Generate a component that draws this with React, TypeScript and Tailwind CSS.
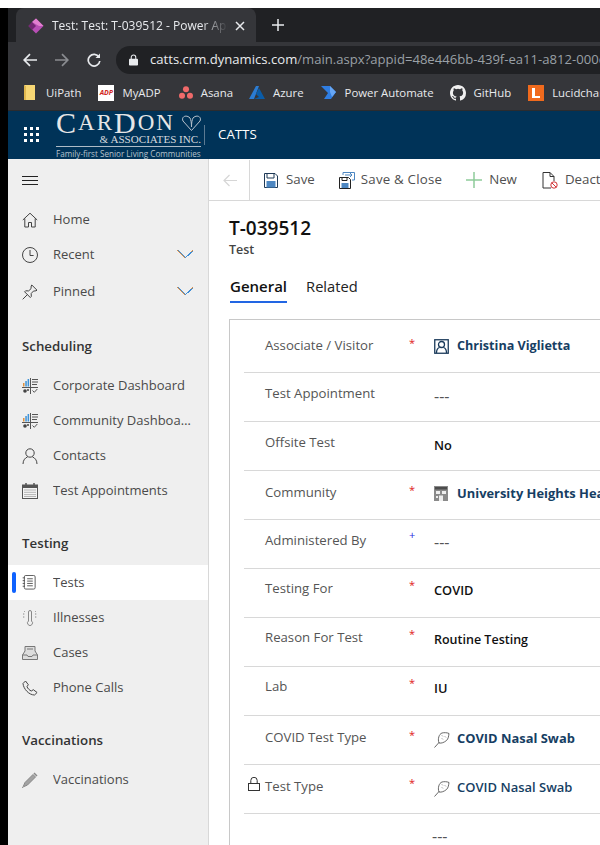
import React from "react";

const font = "[font-family:'Open_Sans','Noto_Sans',sans-serif]";

function Stroke({ children, size = 16, vb = 16, color = "#444", sw = 1 }: { children: React.ReactNode; size?: number; vb?: number; color?: string; sw?: number }) {
  return (
    <svg width={size} height={size} viewBox={`0 0 ${vb} ${vb}`} fill="none" stroke={color} strokeWidth={sw} className="shrink-0">
      {children}
    </svg>
  );
}

const HomeIcon = () => (
  <Stroke>
    <path d="M.8 8 8 1.200 15.200 8M2.800 6.500V15h3.700v-4.500h3V15h3.700V6.500" />
  </Stroke>
);
const ClockIcon = () => (
  <Stroke>
    <circle cx="8" cy="8" r="7.500" />
    <path d="M8 3v5.500h3.600" />
  </Stroke>
);
const PinIcon = () => (
  <Stroke>
    <path d="M.7 15.300 5.500 10.500M9.800 1 15 6.200l-1 .6-2.600.3-2.200 2.400.1 3-1 1L2.600 7.800l1-1 3 .1 2.400-2.200.2-2.700z" />
  </Stroke>
);
const DashIcon = () => (
  <svg width="16" height="16" viewBox="0 0 16 16" fill="none" className="shrink-0">
    <path d="M0 9.500h16M8.500 0v16" stroke="#555" />
    <path d="M1 5h1.500v3.500H1z" fill="#e0913f" />
    <path d="M3.300 3h1.500v5.500H3.300zM5.600 1h1.500v7.500H5.600z" fill="#3e93d8" />
    <path d="M10 1.500h6M10 4h6M10 6.500h5" stroke="#555" />
    <circle cx="3" cy="13" r="1.800" fill="#444" />
    <circle cx="6" cy="12" r="1" fill="#444" />
    <path d="M10.500 12.500l1.800 1.800 3-3.300" stroke="#555" />
  </svg>
);
const PersonIcon = () => (
  <Stroke>
    <circle cx="8" cy="5" r="4.200" />
    <path d="M1 16c0-4 2.500-6.500 4.500-7M15 16c0-4-2.500-6.500-4.500-7" />
  </Stroke>
);
const CalIcon = () => (
  <svg width="16" height="16" viewBox="0 0 16 16" className="shrink-0">
    <rect x=".5" y="2" width="15" height="13.500" fill="#f4f4f4" stroke="#555" />
    <rect x="0" y="2" width="16" height="3" fill="#555" />
    <path d="M4 0v3M12 0v3" stroke="#555" strokeWidth="1.500" />
    <path d="M2.500 7h11M2.500 9.300h11M2.500 11.600h11M2.500 13.500h11" stroke="#777" strokeDasharray="1 1" />
  </svg>
);
const TestsIcon = () => (
  <Stroke size={15}>
    <rect x="2.500" y=".5" width="11.500" height="14.500" rx="1.500" stroke="#555" />
    <path d="M5.500 4h6M5.500 6.500h6M5.500 9h6M5.500 11.500h6M.7 3h2.500M.7 6h2.500M.7 9h2.500M.7 12h2.500" stroke="#555" />
  </Stroke>
);
const ThermoIcon = () => (
  <Stroke color="#888">
    <path d="M6.500 2a1.500 1.500 0 0 1 3 0v9a2.500 2.500 0 1 1-3 0z" />
    <path d="M1 4h2M1 7h2M2 1l1 1M13 4h2M13 7h2M13 2l1-1" strokeDasharray="1 .7" />
  </Stroke>
);
const CasesIcon = () => (
  <svg width="16" height="14" viewBox="0 0 16 14" className="shrink-0" fill="none" stroke="#777">
    <path d="M3 .5h10v6H3z" fill="#ddd" />
    <path d="M5 3h6" />
    <path d="M3 5 .5 9v4.500h15V9L13 5" fill="#ddd" />
    <path d="M.5 9h4.500l1 1.500h4l1-1.500h4.500" />
  </svg>
);
const PhoneIcon = () => (
  <Stroke color="#444">
    <path d="M1 3.500 3.500 1 6.300 4.700 5 6.700c.7 1.800 2.500 3.600 4.300 4.300l2-1.300 3.800 2.800-2.600 2.500C7 15 1.500 9 1 3.500z" />
  </Stroke>
);
const PencilIcon = () => (
  <svg width="16" height="16" viewBox="0 0 16 16" className="shrink-0">
    <path d="M1 15 3 10.500 11 2.500 13.500 5 5.500 13z" fill="#a2a2a2" stroke="#888" />
    <path d="M12 1l3 3" stroke="#888" strokeWidth="1.500" />
    <path d="M0 16l2-2" stroke="#999" />
  </svg>
);
const Chevron = () => (
  <svg width="17" height="9" viewBox="0 0 17 9" fill="none" strokeWidth="1" shapeRendering="crispEdges" className="shrink-0">
    <path d="M.5.500 8 8 15.500.5" stroke="#dd8f45" />
    <path d="M1.500.500 8.500 7.500 16.500.5" stroke="#3f8ed6" />
  </svg>
);
const Hamburger = () => (
  <svg width="16" height="9" viewBox="0 0 16 9" stroke="#222" className="shrink-0">
    <path d="M0 .5h16M0 4.500h16M0 8.500h16" />
  </svg>
);

type NavItem = { label: string; icon: React.ReactNode; chevron?: boolean; selected?: boolean };

function NavRow({ item }: { item: NavItem }) {
  return (
    <div className={`relative flex h-[35px] items-center pl-[14px] pr-[14px] ${item.selected ? "bg-white" : ""}`}>
      {item.selected && <span className="absolute left-1 top-[7px] h-[21px] w-1 rounded-sm bg-[#0f62fe]" />}
      <span className="flex w-[31px] shrink-0 items-center justify-start">{item.icon}</span>
      <span className="flex-1 truncate pr-[2px] text-[13px] text-[#4a4a4a]">{item.label}</span>
      {item.chevron && <Chevron />}
    </div>
  );
}

function SectionTitle({ children, className }: { children: React.ReactNode; className: string }) {
  return <div className={`pl-[14px] text-[13.300px] font-semibold leading-[18px] text-[#333] ${className}`}>{children}</div>;
}

function Sidebar() {
  return (
    <aside className="flex w-[201px] shrink-0 flex-col border-r border-[#d8d8d8] bg-[#efefef]">
      <div className="flex h-[43px] items-center pl-[14px]">
        <Hamburger />
      </div>
      <NavRow item={{ label: "Home", icon: <HomeIcon /> }} />
      <NavRow item={{ label: "Recent", icon: <ClockIcon />, chevron: true }} />
      <div className="mt-[2px]">
        <NavRow item={{ label: "Pinned", icon: <PinIcon />, chevron: true }} />
      </div>
      <SectionTitle className="mt-[28px]">Scheduling</SectionTitle>
      <div className="mt-[13px]">
        <NavRow item={{ label: "Corporate Dashboard", icon: <DashIcon /> }} />
        <NavRow item={{ label: "Community Dashboard", icon: <DashIcon /> }} />
        <NavRow item={{ label: "Contacts", icon: <PersonIcon /> }} />
        <NavRow item={{ label: "Test Appointments", icon: <CalIcon /> }} />
      </div>
      <SectionTitle className="mt-[26px]">Testing</SectionTitle>
      <div className="mt-[13px]">
        <NavRow item={{ label: "Tests", icon: <TestsIcon />, selected: true }} />
        <NavRow item={{ label: "Illnesses", icon: <ThermoIcon /> }} />
        <NavRow item={{ label: "Cases", icon: <CasesIcon /> }} />
        <NavRow item={{ label: "Phone Calls", icon: <PhoneIcon /> }} />
      </div>
      <SectionTitle className="mt-[26px]">Vaccinations</SectionTitle>
      <div className="mt-[13px]">
        <NavRow item={{ label: "Vaccinations", icon: <PencilIcon /> }} />
      </div>
    </aside>
  );
}

function CommandBar() {
  return (
    <div className="flex h-[42px] shrink-0 items-center border-b border-[#d8d8d8] pt-[1px] text-[13.300px] text-[#505050]">
      <div className="flex h-full w-[41px] shrink-0 items-center justify-center border-r border-[#d8d8d8] pl-[1px]">
        <svg width="14" height="13" viewBox="0 0 14 13" fill="none" stroke="#d6d6d6" strokeWidth="1.200">
          <path d="M14 6.500H1M6.500 1 1 6.500 6.500 12" />
        </svg>
      </div>
      <div className="ml-[14px] flex items-center whitespace-nowrap">
        <svg width="14" height="15" viewBox="0 0 14 15" fill="none" className="mr-2 shrink-0">
          <path d="M.5.500h10.500l2.500 2.500v11.500H.5z" stroke="#1f3a57" />
          <path d="M3 .5h7v4.500H3z" stroke="#1f3a57" />
          <rect x="2.500" y="8" width="9" height="6.500" fill="#4d87c2" />
        </svg>
        <span>Save</span>
        <svg width="16" height="17" viewBox="0 0 16 17" fill="none" className="ml-[24px] mr-[6px] shrink-0">
          <path d="M.5 5.500h9l2 2v9H.5z" stroke="#222" />
          <rect x="2.500" y="11" width="7" height="5" fill="#4d87c2" />
          <path d="M3 5.500v3h5v-3" stroke="#222" />
          <path d="M4 3V.5h11.500V8H13M6 3h7M11 1l2 2-2 2" stroke="#4d87c2" />
        </svg>
        <span className="tracking-[.2px]">Save &amp; Close</span>
        <svg width="16" height="16" viewBox="0 0 16 16" stroke="#8ecb9a" strokeWidth="1.500" className="ml-[24px] mr-[7px] shrink-0">
          <path d="M8 0v16M0 8h16" />
        </svg>
        <span>New</span>
        <svg width="16" height="17" viewBox="0 0 16 17" fill="none" className="ml-[25px] mr-[7px] shrink-0">
          <path d="M9 16H1V.5h7l4 4V9" stroke="#333" />
          <path d="M8 .5v4h4" stroke="#333" />
          <circle cx="12" cy="13" r="3.200" stroke="#d13438" />
          <path d="M9.800 10.800l4.400 4.400" stroke="#d13438" />
        </svg>
        <span>Deactivate</span>
      </div>
    </div>
  );
}

const ContactIcon = () => (
  <svg width="15" height="15" viewBox="0 0 15 15" fill="none" stroke="#1a3a5a" className="mr-2 shrink-0">
    <rect x=".75" y=".75" width="13.500" height="13.500" strokeWidth="1.300" />
    <circle cx="7.500" cy="5.500" r="3" strokeWidth="1.300" />
    <path d="M2.500 14c0-3 1.500-5 3-5.500M12.500 14c0-3-1.500-5-3-5.500" strokeWidth="1.300" />
  </svg>
);
const BuildingIcon = () => (
  <svg width="15" height="16" viewBox="0 0 15 16" className="mr-2 shrink-0">
    <rect x="0" y="0" width="14" height="15" fill="#8a8a8a" />
    <rect x="1" y="1" width="12" height="2.500" fill="#4c4c4c" />
    <rect x="2" y="5" width="4" height="3" fill="#eee" />
    <rect x="8" y="5" width="4" height="3" fill="#eee" />
    <rect x="5" y="9.500" width="4" height="5.500" fill="#eee" />
    <rect x="2" y="10" width="2" height="2" fill="#eee" />
  </svg>
);
const SwabIcon = () => (
  <svg width="16" height="17" viewBox="0 0 16 17" fill="none" stroke="#444" strokeWidth=".8" className="mr-[7px] shrink-0">
    <path d="M.5 16.500 5 11.500" />
    <path d="M5 12C3.500 8 5 3 8 2c2-.5 5-.5 7 .5-.5 3-.5 5-2.500 7-2.500 2-5 3-7.500 2.500z" />
    <path d="M8 4.500l.8.8M11 5.500l.8.8M8 7.500l.8.8" />
  </svg>
);

type Row = {
  label: string;
  mark?: string;
  value: string;
  valueClass: string;
  icon?: React.ReactNode;
  lock?: boolean;
  rowClass: string;
  labelClass: string;
  markClass: string;
  valueTop: string;
};

const link = "text-[13px] font-semibold text-[#163e63]";
const bold = "text-[12.900px] font-bold text-[#163e63]";
const plain = "text-[12.800px] font-semibold text-[#111]";
const empty = "text-[16px] text-[#555]";

const rows: Row[] = [
  { label: "Associate / Visitor", mark: "*", value: "Christina Viglietta", valueClass: "text-[12.600px] font-bold text-[#163e63]", icon: <ContactIcon />, rowClass: "h-[53px]", labelClass: "pt-[15px]", markClass: "pt-[16px]", valueTop: "pt-[16px]" },
  { label: "Test Appointment", value: "---", valueClass: empty, rowClass: "h-[49px]", labelClass: "pt-[10px]", markClass: "pt-[11px]", valueTop: "pt-[13px]" },
  { label: "Offsite Test", value: "No", valueClass: plain, rowClass: "h-[49px]", labelClass: "pt-[10px]", markClass: "pt-[11px]", valueTop: "pt-[14px]" },
  { label: "Community", mark: "*", value: "University Heights Health and Living", valueClass: bold, icon: <BuildingIcon />, rowClass: "h-[49px]", labelClass: "pt-[11px]", markClass: "pt-[12px]", valueTop: "pt-[13px]" },
  { label: "Administered By", mark: "+", value: "---", valueClass: empty, rowClass: "h-[49px]", labelClass: "pt-[10px]", markClass: "pt-[8px]", valueTop: "pt-[12px]" },
  { label: "Testing For", mark: "*", value: "COVID", valueClass: plain, rowClass: "h-[49px]", labelClass: "pt-[9px]", markClass: "pt-[9px]", valueTop: "pt-[12px]" },
  { label: "Reason For Test", mark: "*", value: "Routine Testing", valueClass: "text-[12.500px] font-semibold text-[#111]", rowClass: "h-[49px]", labelClass: "pt-[9px]", markClass: "pt-[9px]", valueTop: "pt-[12px]" },
  { label: "Lab", mark: "*", value: "IU", valueClass: plain, rowClass: "h-[49px]", labelClass: "pt-[9px]", markClass: "pt-[9px]", valueTop: "pt-[12px]" },
  { label: "COVID Test Type", mark: "*", value: "COVID Nasal Swab", valueClass: bold, icon: <SwabIcon />, rowClass: "h-[49px]", labelClass: "pt-[11px]", markClass: "pt-[12px]", valueTop: "pt-[13px]" },
  { label: "Test Type", mark: "*", value: "COVID Nasal Swab", valueClass: link, icon: <SwabIcon />, lock: true, rowClass: "h-[49px]", labelClass: "pt-[11px]", markClass: "pt-[11px]", valueTop: "pt-[13px]" },
];

function FormRow({ row }: { row: Row }) {
  return (
    <div className={`relative flex border-b border-[#d8d8d8] ${row.rowClass}`}>
      {row.lock && (
        <svg width="12" height="14" viewBox="0 0 12 14" fill="none" stroke="#333" className="absolute left-[4px] top-[12px]">
          <rect x=".5" y="6.500" width="11" height="7" />
          <path d="M2.800 6.500V3.500a3.200 3.200 0 0 1 6.400 0v3" />
        </svg>
      )}
      <div className={`w-[165px] shrink-0 pl-[21px] text-[13.200px] leading-[20px] text-[#555] ${row.labelClass}`}>{row.label}</div>
      <div className={`w-[25px] shrink-0 text-[11px] leading-[14px] ${row.mark === "+" ? "text-[#1f1fe0]" : "text-[#e02020]"} ${row.markClass}`}>
        {row.mark}
      </div>
      <div className={`self-start whitespace-nowrap ${row.valueTop}`}>
        <div className={`flex h-[20px] items-center ${row.valueClass}`}>
          {row.icon}
          <span>{row.value}</span>
        </div>
      </div>
    </div>
  );
}

function Logo() {
  return (
    <div className="flex h-full w-[148px] shrink-0 flex-col items-stretch overflow-hidden">
      <div className="flex h-[23px] items-center tracking-[2px] [font-family:'Liberation_Serif',serif] text-[#e6e6e6]">
        <span className="text-[30px] leading-[23px]">C</span>
        <span className="text-[23px] leading-[23px]">AR</span>
        <span className="text-[30px] leading-[23px]">D</span>
        <span className="text-[23px] leading-[23px]">ON</span>
        <svg width="21" height="16" viewBox="0 0 21 16" fill="none" stroke="#b9c2cc" className="ml-[6px] shrink-0">
          <path d="M10.500 15.500 2 6C0 2 5-1 9 3c1 2 1.500 5 1.500 9M10.500 15.500 19 6c2-4-3-7-7-3-1 2-1.500 5-1.500 9" />
        </svg>
      </div>
      <div className="pr-[3px] text-right [font-family:'Liberation_Serif',serif] text-[11.100px] leading-[11px] text-[#d5d9de]">&amp; ASSOCIATES INC.</div>
      <div className="mt-[1px] h-[2px] w-[145px] bg-[#aebbc6]" />
      <div className="mt-[2px] whitespace-nowrap text-[8.150px] leading-[10px] text-[#b7c2cc]">Family-first Senior Living Communities</div>
    </div>
  );
}

function Bookmark({ label, icon, className }: { label: string; icon: React.ReactNode; className: string }) {
  return (
    <div className={`flex shrink-0 items-center gap-[8px] ${className}`}>
      {icon}
      <span>{label}</span>
    </div>
  );
}

function Chrome() {
  return (
    <div className="shrink-0">
      <div className="flex h-[34px] items-end bg-[#202124] pl-[8px]">
        <div className="flex h-[34px] w-[240px] shrink-0 items-center rounded-t-lg bg-[#35363a] pl-[12px] pr-[11px] pt-[1px] text-[12px] text-[#e8eaed]">
          <svg width="16" height="16" viewBox="0 0 16 16" className="mr-[8px] shrink-0">
            <path d="M8 .5 15.500 8 8 15.500.5 8z" fill="#b84fb5" />
            <path d="M8 .5 15.500 8 11 8 4 4z" fill="#e27fd0" />
            <path d="M.5 8 4 4l4 4-4 4z" fill="#742774" />
          </svg>
          <span className="flex-1 overflow-hidden whitespace-nowrap [mask-image:linear-gradient(to_right,black_85%,transparent)]">Test: Test: T-039512 - Power Apps</span>
          <svg width="10" height="10" viewBox="0 0 10 10" stroke="#e8eaed" strokeWidth="1.500" className="ml-[7px] shrink-0">
            <path d="M1 1l8 8M9 1 1 9" />
          </svg>
        </div>
        <svg width="12" height="12" viewBox="0 0 12 12" stroke="#e8eaed" strokeWidth="1.500" className="mb-[11px] ml-[16px] shrink-0">
          <path d="M6 0v12M0 6h12" />
        </svg>
      </div>
      <div className="flex h-[32px] items-center bg-[#35363a] pl-[15px] pt-[4px]">
        <svg width="14" height="14" viewBox="0 0 14 14" fill="none" stroke="#e8eaed" strokeWidth="1.700" className="shrink-0">
          <path d="M14 7H1.500M7 1.200 1.200 7 7 12.800" />
        </svg>
        <svg width="14" height="14" viewBox="0 0 14 14" fill="none" stroke="#8a8c90" strokeWidth="1.700" className="ml-[18px] shrink-0">
          <path d="M0 7h12.500M7 1.200 12.800 7 7 12.800" />
        </svg>
        <svg width="14" height="14" viewBox="0 0 14 14" fill="none" stroke="#e8eaed" strokeWidth="1.700" className="ml-[18px] shrink-0">
          <path d="M12 4.200A5.800 5.800 0 1 0 12.800 8" />
          <path d="M13 0.500V5H8.500z" fill="#e8eaed" stroke="none" />
        </svg>
        <div className="ml-[15px] flex h-[28px] flex-1 items-center overflow-hidden rounded-l-[14px] bg-[#202124] pl-[13px] text-[13.100px]">
          <svg width="9" height="12" viewBox="0 0 10 12" className="mr-[12px] shrink-0">
            <rect y="4.500" width="10" height="7.500" rx="1" fill="#e8eaed" />
            <path d="M2.500 5V3a2.500 2.500 0 0 1 5 0v2" fill="none" stroke="#e8eaed" strokeWidth="1.200" />
          </svg>
          <span className="whitespace-nowrap text-[#e8eaed]">catts.crm.dynamics.com</span>
          <span className="whitespace-nowrap text-[#9aa0a6]">/main.aspx?appid=48e446bb-439f-ea11-a812-000d3a8b3ec6</span>
        </div>
      </div>
      <div className="flex h-[37px] items-center overflow-hidden border-b border-[#2b2c2f] bg-[#35363a] pl-[16px] pt-[2px] text-[11.400px] text-[#e8eaed]">
        <Bookmark
          label="UiPath"
          className="gap-[10px]"
          icon={<svg width="12" height="15" viewBox="0 0 12 15"><path d="M0 1a1 1 0 0 1 1-1h10v15H1a1 1 0 0 1-1-1z" fill="#f7d774" /><path d="M0 1h2v14H1a1 1 0 0 1-1-1z" fill="#e0b84f" /></svg>}
        />
        <Bookmark
          label="MyADP"
          className="ml-[17px]"
          icon={<span className="flex h-4 w-4 items-center justify-center bg-white text-[7px] font-bold italic leading-none text-[#d0271d]">ADP</span>}
        />
        <Bookmark
          label="Asana"
          className="ml-[18px]"
          icon={<svg width="14" height="13" viewBox="0 0 13 12" fill="#f06a6a"><circle cx="6.500" cy="3" r="2.800" /><circle cx="2.800" cy="9" r="2.800" /><circle cx="10.200" cy="9" r="2.800" /></svg>}
        />
        <Bookmark
          label="Azure"
          className="ml-[16px]"
          icon={<svg width="16" height="13" viewBox="0 0 16 13"><path d="M7 0h3L5 13H0z" fill="#2b7cd3" /><path d="M10 2l6 11H5l5-2-3-3z" fill="#0a5ca8" /></svg>}
        />
        <Bookmark
          label="Power Automate"
          className="ml-[17px]"
          icon={<svg width="16" height="13" viewBox="0 0 16 13"><path d="M0 0h9l6 6-5 7H3l4-6z" fill="#2f7de1" /><path d="M9 0l6 6-4 5-2-5z" fill="#66a6f5" /></svg>}
        />
        <Bookmark
          label="GitHub"
          className="ml-[16px]"
          icon={<svg width="16" height="16" viewBox="0 0 16 16" fill="#f0f0f0"><path d="M8 0C3.580 0 0 3.580 0 8c0 3.540 2.290 6.530 5.470 7.590.4.070.55-.17.55-.38 0-.19-.01-.82-.01-1.490-2.010.37-2.530-.49-2.690-.94-.09-.23-.48-.94-.82-1.130-.28-.15-.68-.52-.01-.53.63-.01 1.080.58 1.230.82.720 1.210 1.870.87 2.330.66.070-.52.280-.87.510-1.070-1.780-.2-3.640-.89-3.640-3.950 0-.87.310-1.590.820-2.150-.080-.2-.360-1.020.080-2.120 0 0 .670-.210 2.200.820a7.420 7.420 0 0 1 4 0c1.530-1.040 2.200-.820 2.200-.820.440 1.100.160 1.920.080 2.120.510.560.820 1.270.820 2.150 0 3.070-1.870 3.750-3.650 3.950.290.250.540.730.540 1.480 0 1.070-.010 1.930-.010 2.200 0 .210.150.460.550.380A8.010 8.010 0 0 0 16 8c0-4.420-3.580-8-8-8z" /></svg>}
        />
        <Bookmark
          label="Lucidchart"
          className="ml-[17px]"
          icon={<svg width="16" height="16" viewBox="0 0 16 16"><rect width="16" height="16" fill="#f06a1d" /><path d="M4 3h3v8h5v2H4z" fill="#fff" /></svg>}
        />
      </div>
      <div className="flex h-[48px] items-center bg-[#003358] pl-[16px]">
        <svg width="16" height="16" viewBox="0 0 16 16" fill="#fff" className="mr-[16px] shrink-0">
          <rect x="0" y="0" width="3" height="3" /><rect x="6" y="0" width="3" height="3" /><rect x="12" y="0" width="3" height="3" />
          <rect x="0" y="6" width="3" height="3" /><rect x="6" y="6" width="3" height="3" /><rect x="12" y="6" width="3" height="3" />
          <rect x="0" y="12" width="3" height="3" /><rect x="6" y="12" width="3" height="3" /><rect x="12" y="12" width="3" height="3" />
        </svg>
        <Logo />
        <div className="mr-[13px] h-[20px] w-px bg-[#5c7a92]" />
        <span className="text-[13.300px] text-white">CATTS</span>
      </div>
    </div>
  );
}

export default function App() {
  return (
    <div className={`flex h-[845px] w-[600px] flex-col overflow-hidden bg-white ${font}`}>
      <div className="h-2 shrink-0 bg-white" />
      <div className="flex min-h-0 flex-1">
        <div className="w-2 shrink-0 bg-black" />
        <div className="flex min-w-0 flex-1 flex-col">
          <Chrome />
          <div className="flex min-h-0 flex-1">
            <Sidebar />
            <main className="min-w-0 flex-1 overflow-hidden bg-white">
              <CommandBar />
              <div className="pl-[20px]">
                <div className="mt-[14px] text-[19px] font-semibold leading-[26px] text-[#111]">T-039512</div>
                <div className="text-[12.500px] font-semibold leading-[17px] text-[#444]">Test</div>
                <div className="ml-px mt-[18px] flex leading-[20px]">
                  <div className="border-b-[2px] border-[#2266e3] pb-[5px] text-[15px] font-semibold text-[#111]">General</div>
                  <div className="ml-[19px] text-[14.700px] text-[#222]">Related</div>
                </div>
                <div className="mt-[16px] h-[600px] border-l border-t border-[#c8c8c8] pl-[14px]">
                  {rows.map((r) => (
                    <FormRow key={r.label} row={r} />
                  ))}
                  <div className="ml-[188px] pt-[12px] text-[16px] leading-[20px] text-[#555]">---</div>
                </div>
              </div>
            </main>
          </div>
        </div>
      </div>
    </div>
  );
}
